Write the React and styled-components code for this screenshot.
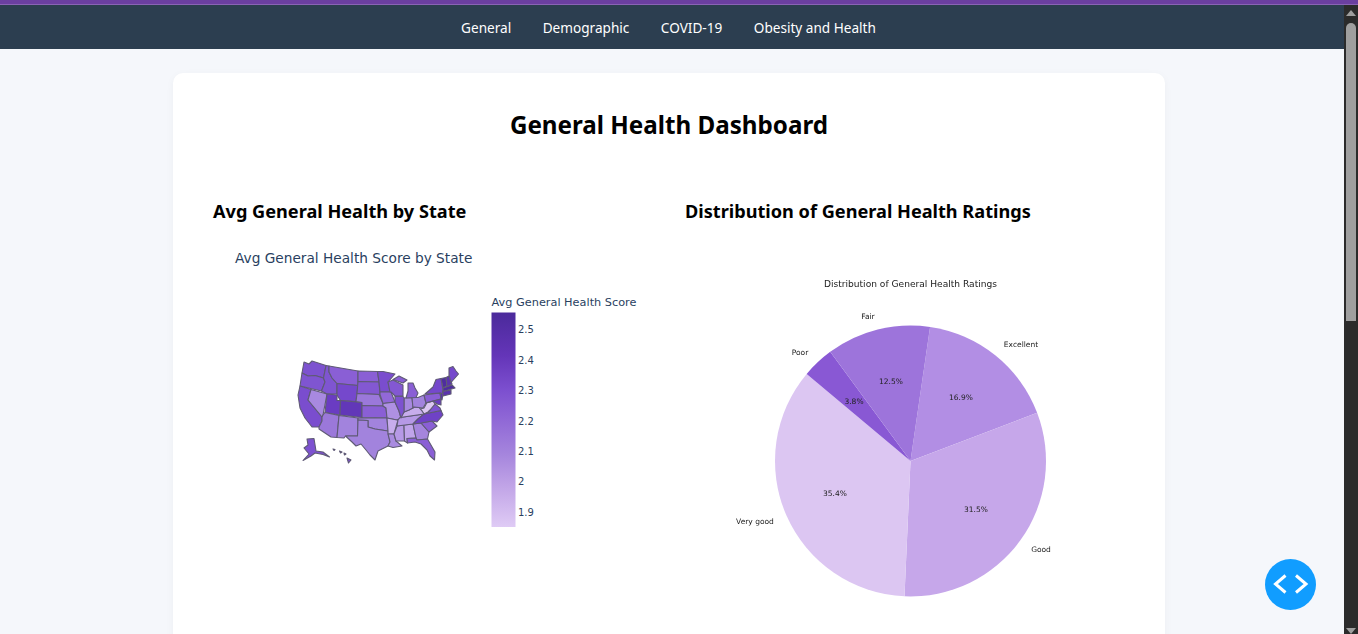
import styled, { createGlobalStyle } from 'styled-components'

const GlobalStyle = createGlobalStyle`
    html, body {
        margin: 0;
        height: 100%;
        overflow: hidden;
        background: #f5f7fb;
        font-family: "Noto Sans", "Open Sans", sans-serif;
    }
`

const NAV_ITEMS = ['General', 'Demographic', 'COVID-19', 'Obesity and Health']

// state outlines, in page pixels of the chart area
const STATES = [
    ['#7d52d0', '304,362 309,364 312,361 326,365.5 323.5,378 315,375.5 308,376 302,373'],
    ['#7f55d1', '302,373 308,376 315,375.5 323.5,378 325,382 321.5,391 300,386'],
    ['#7a4dce', '300,386 311,389.5 308,400 322,417 322,421 319,427 312,427 305,418 300,408 298,395'],
    ['#a889e0', '311,389.5 327,394 323,415 322,417 308,400'],
    ['#7f55d1', '326,365.5 329,366 329,372 332,378 337,383.5 337,394 327,394 321.5,391 325,382 323.5,378'],
    ['#8a5fd5', '329,366 358,371 358,385.5 337,383.5 332,378 329,372'],
    ['#7548cc', '337,383.5 358,385.5 356,401.5 340.5,400.5 337,395'],
    ['#6a3cc2', '327,394 337,395 337,400.5 340.5,400.5 340,415 325,412.5'],
    ['#6237b8', '340.5,400.5 362,402.5 362,417.5 340,415'],
    ['#9b78da', '325,412.5 339,415.5 337,437.5 331,437 319,429 319,427 322,421 322,417 323,415'],
    ['#a283dd', '339,415.5 358,418 358,420 357.5,436 345.5,436 344,438 337,437.5'],
    ['#8a5fd5', '358,371 377.5,371.5 379,382 358,381.5'],
    ['#8358d2', '358,381.5 379,382 380,394.5 357,393.5'],
    ['#9b78da', '357,393.5 379,394.5 383,403.5 383,406 362,405.5 362,402.5 356,401.5'],
    ['#8a5fd5', '362,405.5 383,406 386,408 387,418 362,417.5'],
    ['#a283dd', '358,418 387,418 388,431 375,429 368,427 368,420.5 358,420'],
    ['#a283dd', '358,420 368,420.5 368,427 375,429 388,431 390,442 388,446 378,451 375,460 370,455 366,450 361,444 356,446 352,442 345.5,436 357.5,436'],
    ['#7a4dce', '377.5,371.5 383,371.5 395,374 388,382 390,392 380,392 379,382'],
    ['#9268d8', '380,392 391,392 395,402 383,403.5 380,394.5'],
    ['#ae90e2', '383,403.5 395,402 399,411 401,418 397,420 387,418 386,408 383,406'],
    ['#c7adec', '387,418 397,420 398,420 394,434 388,434 388,431'],
    ['#a98be0', '388,434 394,434 396,441 402,446 393,447.5 388,446 390,442'],
    ['#b699e6', '397,426 404,425 404.5,441 396,441 394,434'],
    ['#c0a4ea', '404,425 413,424 416,438 407,438.5 407.5,443 404.5,441'],
    ['#a585dd', '413,424 421,423 429,432 427.5,439 417,440 416,438'],
    ['#8a5fd5', '407,438.5 416,438 417,440 427.5,439 435,452 434.5,460 430,456 427,450 421,444 415,442 407.5,443'],
    ['#8a5fd5', '421,423 432,421 437,426 429,432'],
    ['#b699e6', '398,420 400,417.5 424,414 418,419 413,424 397,426'],
    ['#6f42c6', '424,414 441,410.5 443,415 437,422 432,421 421,423 413,424 418,419'],
    ['#7d52d0', '424,414 428,412 430,410 435,404 440,408 441,410.5'],
    ['#dcc6f2', '420,409 424,408 427,402.5 433,401 435,404 430,410 428,412 424,414 422,411'],
    ['#c7adec', '400,417.5 404,412 409,410 414,407 419,407.5 422,411 424,414'],
    ['#a889e0', '404,398 412,397.5 413,408 409,410 404,412'],
    ['#a283dd', '412,397.5 418,397.5 424,395 426,403 423,408 419,407.5 414,407 413,408'],
    ['#7d52d0', '395,396 403,396.5 404,398 404,412 401,418 399,411 395,402'],
    ['#8358d2', '388,382 393,380 403,385 403,396 395,396 391,392 390,392'],
    ['#8a5fd5', '393,379.5 399,376 407,380 403,383'],
    ['#8a5fd5', '408,383 413,383 415,388 418,393 416,397.5 406,398 408,391'],
    ['#8a5fd5', '424,395 440,393 441,399 426,403'],
    ['#7548cc', '425,394 433,387 436,379.5 441,378.5 443,390 442,394 440,393'],
    ['#5b33ad', '440,393 443,394 442,400 441,399'],
    ['#6a3cc2', '427,402.5 441,399 441,405 437,404 433,401'],
    ['#4f2ca0', '441,378.5 446,377.5 447,386 443,388'],
    ['#5b33ad', '446,377.5 449,376 452,384 447,387'],
    ['#7548cc', '449,375 449,368 453,366.5 456,371 458.5,374 451,382.5'],
    ['#4f2ca0', '443,388 452,385 455,388 443,391.5'],
    ['#5b33ad', '443,391.5 451,390 451,394 443,396'],
    ['#7d52d0', '307,439 314,438.5 316,451 323,452 329.5,457 323,454.5 315,453 311,456 303,460.5 309,454 304,448 308,445'],
    ['#7d52d0', '347,458 351,460 348.5,463'],
    ['#7d52d0', '333,449 335,449.5 334,450.5'],
    ['#7d52d0', '339.5,451 342,452 340.5,453'],
    ['#7d52d0', '344,453 346,454 344.5,455'],
]

const COLOR_TICKS = [['2.5', 329], ['2.4', 360], ['2.3', 390], ['2.2', 421], ['2.1', 451], ['2', 481], ['1.9', 512]]

const PIE_CENTER = { x: 910.5, y: 461, r: 135.5 }
const PIE_SLICES = [
    { share: 16.9, color: '#b28ee4' },
    { share: 31.5, color: '#c6a7ea' },
    { share: 35.4, color: '#dcc6f2' },
    { share: 3.8, color: '#8958d4' },
    { share: 12.4, color: '#9d74db' },
]
const PIE_LABELS = [
    ['Fair', 868, 316], ['Excellent', 1021, 344], ['Poor', 800, 352], ['Very good', 755, 521], ['Good', 1041, 549],
    ['12.5%', 891, 381], ['16.9%', 961, 397], ['3.8%', 854, 401], ['35.4%', 835, 493], ['31.5%', 976, 509],
]

const piePoint = (deg) => {
    const rad = (deg * Math.PI) / 180
    return `${PIE_CENTER.x + PIE_CENTER.r * Math.sin(rad)} ${PIE_CENTER.y - PIE_CENTER.r * Math.cos(rad)}`
}

const PieSlices = () => {
    let angle = 8.3
    return PIE_SLICES.map(({ share, color }) => {
        const sweep = share * 3.6
        const d = `M${PIE_CENTER.x} ${PIE_CENTER.y} L${piePoint(angle)} A${PIE_CENTER.r} ${PIE_CENTER.r} 0 ${sweep > 180 ? 1 : 0} 1 ${piePoint(angle + sweep)} Z`
        angle += sweep
        return <path key={color} d={d} fill={color} />
    })
}

const App = () => {
    return (
        <>
            <GlobalStyle />
            <AccentBar />
            <Frame>
                <Main>
                    <Nav>
                        {NAV_ITEMS.map((item) => <NavLink key={item}>{item}</NavLink>)}
                    </Nav>
                    <Card>
                        <Title>General Health Dashboard</Title>
                        <Columns>
                            <Column>
                                <Heading>Avg General Health by State</Heading>
                                <ChartSvg viewBox="213 240 456 400">
                                    <MapTitle x="235" y="263">Avg General Health Score by State</MapTitle>
                                    <MapGroup>
                                        {STATES.map(([fill, points]) => (
                                            <polygon key={points} points={points} fill={fill} stroke="#5f5a75" strokeWidth="1.1" strokeLinejoin="round" />
                                        ))}
                                    </MapGroup>
                                    <defs>
                                        <linearGradient id="scale" x1="0" y1="0" x2="0" y2="1">
                                            <stop offset="0" stopColor="#4b2a9b" />
                                            <stop offset="0.2" stopColor="#6435b8" />
                                            <stop offset="0.36" stopColor="#7c4fcf" />
                                            <stop offset="0.5" stopColor="#9068d6" />
                                            <stop offset="0.66" stopColor="#a585dd" />
                                            <stop offset="0.8" stopColor="#bfa2e6" />
                                            <stop offset="1" stopColor="#dfcbf5" />
                                        </linearGradient>
                                    </defs>
                                    <ScaleTitle x="491.5" y="306">Avg General Health Score</ScaleTitle>
                                    <rect x="491.5" y="312.5" width="24" height="214.5" fill="url(#scale)" />
                                    {COLOR_TICKS.map(([label, y]) => (
                                        <ScaleTick key={label} x="518" y={y + 4}>{label}</ScaleTick>
                                    ))}
                                </ChartSvg>
                            </Column>
                            <Column>
                                <Heading>Distribution of General Health Ratings</Heading>
                                <ChartSvg viewBox="685 240 456 400">
                                    <PieGroup>
                                        <PieSlices />
                                        <PieTitle x="910.5" y="287">Distribution of General Health Ratings</PieTitle>
                                        {PIE_LABELS.map(([label, x, y]) => (
                                            <PieLabel key={label} x={x} y={y + 2.5}>{label}</PieLabel>
                                        ))}
                                    </PieGroup>
                                </ChartSvg>
                            </Column>
                        </Columns>
                    </Card>
                </Main>
                <Scrollbar>
                    <ScrollArrow />
                    <ScrollThumb />
                    <ScrollArrow $down />
                </Scrollbar>
            </Frame>
            <DebugButton>
                <svg width="51" height="51" viewBox="0 0 51 51" fill="none" stroke="#fff" strokeWidth="3">
                    <path d="M20.5 16.5 L10.5 25 L20.5 33.5" />
                    <path d="M31 16.5 L41 25 L31 33.5" />
                </svg>
            </DebugButton>
        </>
    )
}

const AccentBar = styled.div`
    height: 5px;
    box-sizing: border-box;
    background: #6b3fa0;
    border-bottom: 1px solid #8a63b5;
`

const Frame = styled.div`
    display: flex;
    height: 629px;
    overflow: hidden;
`

const Main = styled.main`
    flex: 1;
    min-width: 0;
    overflow: hidden;
`

const Nav = styled.nav`
    display: flex;
    justify-content: center;
    gap: 31.5px;
    height: 44px;
    box-sizing: border-box;
    padding: 1px 7px 0 0;
    align-items: center;
    background: #2c3e50;
`

const NavLink = styled.a`
    color: #fff;
    font-size: 13.6px;
`

const Card = styled.section`
    width: 992px;
    box-sizing: border-box;
    margin: 24px 0 0 173px;
    padding: 32px 40px;
    background: #fff;
    border-radius: 10px;
    box-shadow: 0 2px 8px rgba(0, 0, 0, 0.04);
`

const Title = styled.h1`
    margin: 0;
    height: 40px;
    line-height: 40px;
    text-align: center;
    font-size: 24.2px;
    font-weight: 700;
    color: #000;
`

const Columns = styled.div`
    display: grid;
    grid-template-columns: 456px 456px;
    gap: 16px;
    margin-top: 52px;
    width: 928px;
`

const Column = styled.div``

const Heading = styled.h3`
    margin: 0;
    height: 28px;
    line-height: 28px;
    font-size: 18.15px;
    font-weight: 700;
    color: #000;
`

const ChartSvg = styled.svg`
    display: block;
    width: 456px;
    height: 400px;
    margin-top: 15px;
`

const MapGroup = styled.g`
    filter: blur(0.4px);
`

const PieGroup = styled.g`
    filter: blur(0.2px);
`

const MapTitle = styled.text`
    font-family: "DejaVu Sans", sans-serif;
    font-size: 13.7px;
    fill: #2a3f5f;
`

const ScaleTitle = styled.text`
    font-family: "DejaVu Sans", sans-serif;
    font-size: 11.3px;
    fill: #2a3f5f;
`

const ScaleTick = styled.text`
    font-family: "DejaVu Sans", sans-serif;
    font-size: 10px;
    fill: #2a3f5f;
`

const PieTitle = styled.text`
    font-family: "DejaVu Sans", sans-serif;
    font-size: 9.1px;
    text-anchor: middle;
    fill: #222;
`

const PieLabel = styled.text`
    font-family: "DejaVu Sans", sans-serif;
    font-size: 7.5px;
    text-anchor: middle;
    fill: #222;
`

const Scrollbar = styled.div`
    width: 14px;
    flex-shrink: 0;
    display: flex;
    flex-direction: column;
    align-items: center;
    background: #2b2b2b;
`

const ScrollArrow = styled.div`
    width: 0;
    height: 0;
    border-left: 5px solid transparent;
    border-right: 5px solid transparent;
    ${(p) => (p.$down
        ? 'border-top: 6px solid #9f9f9f; margin-top: auto; margin-bottom: 0;'
        : 'border-bottom: 6px solid #9f9f9f; margin-top: 5px;')}
`

const ScrollThumb = styled.div`
    width: 10px;
    height: 298px;
    margin-top: 7px;
    background: #9f9f9f;
    border-radius: 5px 5px 0 0;
`

const DebugButton = styled.div`
    position: fixed;
    left: 1265px;
    top: 559px;
    width: 51px;
    height: 51px;
    border-radius: 50%;
    background: #119dff;
`

export default App
